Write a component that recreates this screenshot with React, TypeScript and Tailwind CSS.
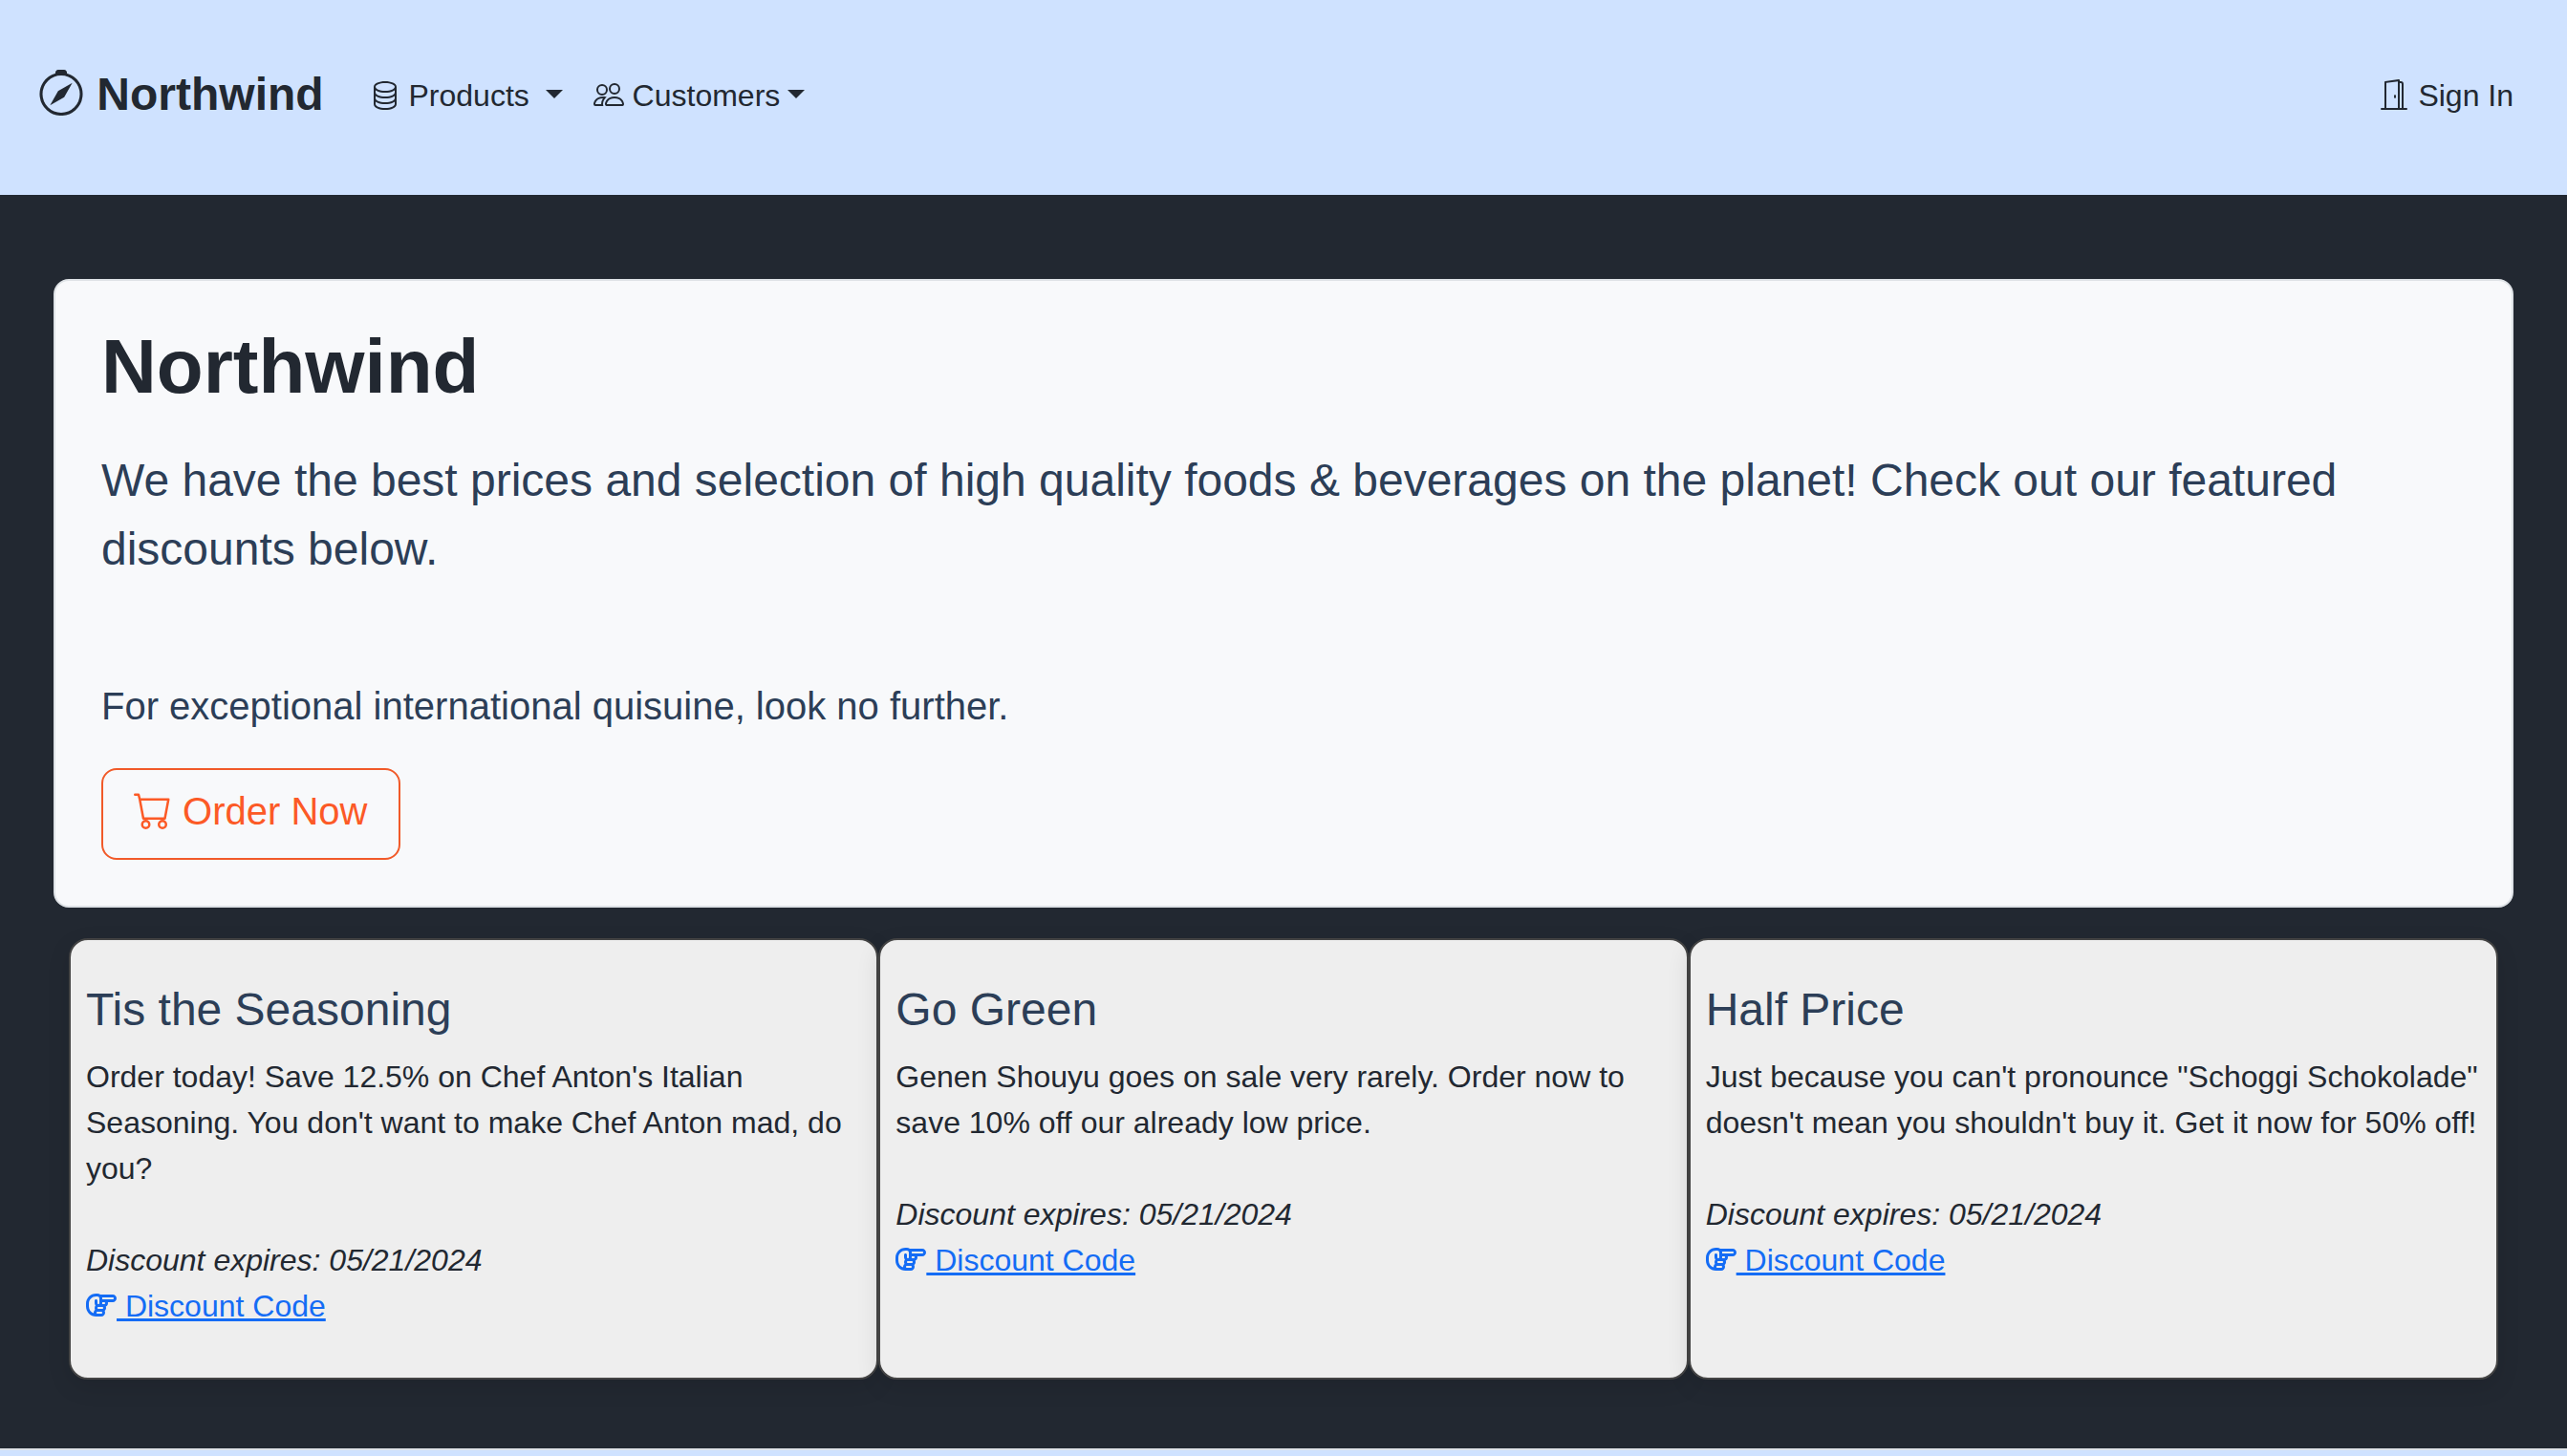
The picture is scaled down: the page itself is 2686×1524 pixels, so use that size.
import React from "react";
import { BsCart, BsCompass, BsDatabase, BsDoorOpen, BsPeople } from "react-icons/bs";
import { FaRegHandPointRight } from "react-icons/fa6";

const discounts = [
  {
    title: "Tis the Seasoning",
    text: "Order today! Save 12.5% on Chef Anton's Italian Seasoning. You don't want to make Chef Anton mad, do you?",
    expires: "05/21/2024",
  },
  {
    title: "Go Green",
    text: "Genen Shouyu goes on sale very rarely. Order now to save 10% off our already low price.",
    expires: "05/21/2024",
  },
  {
    title: "Half Price",
    text: "Just because you can't pronounce \"Schoggi Schokolade\" doesn't mean you shouldn't buy it. Get it now for 50% off!",
    expires: "05/21/2024",
  },
];

function Caret() {
  return (
    <span className="ml-2 inline-block border-x-[9px] border-t-[9px] border-x-transparent border-t-current align-[8px]" />
  );
}

function Header() {
  return (
    <header className="flex items-center bg-[#cfe2ff] pt-[63px] pr-14 pb-[67px] pl-10">
      <a href="#home" className="pb-0.5 text-[48px] leading-[72px] font-bold">
        <BsCompass className="inline align-[-0.125em]" /> Northwind
      </a>
      <nav className="ml-12 flex flex-1 items-center gap-8">
        <button type="button" aria-haspopup="menu">
          <BsDatabase className="inline align-[-0.125em]" /> Products{"\u00a0"}
          <Caret />
        </button>
        <button type="button" aria-haspopup="menu">
          <BsPeople className="inline align-[-0.125em]" /> Customers
          <Caret />
        </button>
        <a href="#sign-in" className="ml-auto">
          <BsDoorOpen className="inline align-[-0.125em]" /> Sign In
        </a>
      </nav>
    </header>
  );
}

function Hero() {
  return (
    <section className="rounded-2xl border-2 border-[#dee2e6] bg-[#f8f9fb] px-12 pt-[42px] pb-12 text-[#2c3e57]">
      <h1 className="text-[80px] leading-[96px] font-bold text-[#222831]">Northwind</h1>
      <p className="mt-[35px] text-[48px] leading-[72px]">
        We have the best prices and selection of high quality foods &amp; beverages on the planet! Check out our
        featured discounts below.
      </p>
      <p className="mt-[98px] text-[40px] leading-[60px]">
        For exceptional international quisuine, look no further.
      </p>
      <a
        href="#order"
        className="mt-[35px] inline-block rounded-2xl border-2 border-[#f15a29] px-8 pt-[13px] pb-[19px] align-top text-[40px] leading-[60px] text-[#fc5a26]"
      >
        <BsCart className="inline align-[-0.125em]" /> Order Now
      </a>
    </section>
  );
}

function DiscountCard({ title, text, expires }: { title: string; text: string; expires: string }) {
  return (
    <article className="rounded-[20px] border-2 border-[#444444] bg-[#eeeeee] px-4 pt-11 pb-[51px] shadow-[0_8px_24px_rgba(0,0,0,0.1)]">
      <h2 className="text-[48px] leading-[58px] text-[#2c3e57]">{title}</h2>
      <p className="mt-[17px]">{text}</p>
      <p className="mt-12 italic">Discount expires: {expires}</p>
      <a href="#discount-code" className="text-[#146cf5] underline">
        <FaRegHandPointRight className="inline align-[-0.125em]" /> Discount Code
      </a>
    </article>
  );
}

export default function App() {
  return (
    <div className="flex min-h-screen flex-col bg-[#222831] font-['Helvetica_Neue','Liberation_Sans',Arial,sans-serif] text-[32px] leading-[48px] text-[#222831]">
      <Header />
      <main className="px-14 pt-[88px] pb-[72px]">
        <Hero />
        <div className="mx-4 mt-8 grid grid-cols-3">
          {discounts.map((d) => (
            <DiscountCard key={d.title} {...d} />
          ))}
        </div>
      </main>
      <footer className="flex-1 border-t-2 border-[#dee2e6] bg-[#cfe2ff]" />
    </div>
  );
}
